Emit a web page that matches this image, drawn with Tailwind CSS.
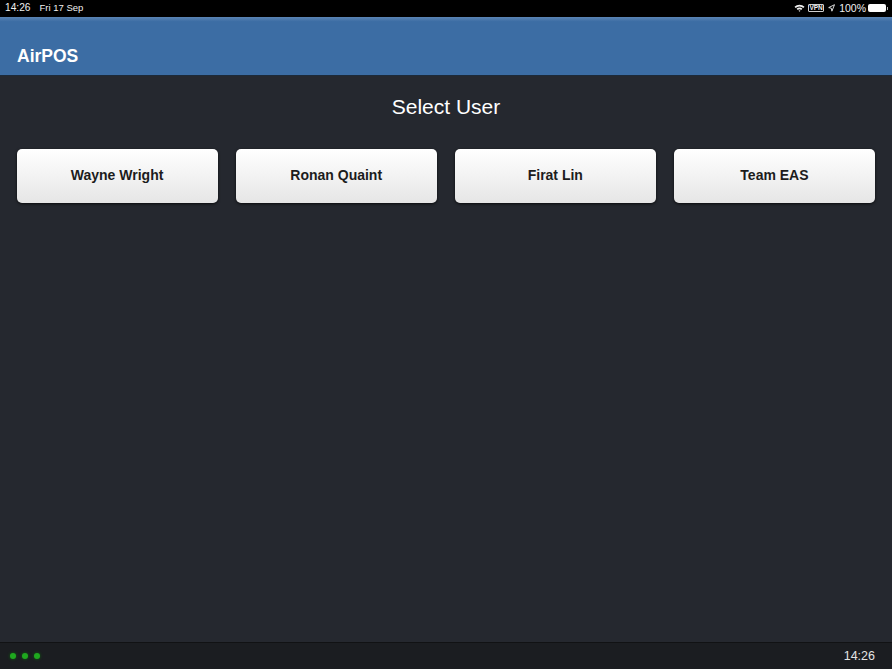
<!DOCTYPE html>
<html lang="en">
<head>
    <meta charset="UTF-8">
    <meta name="viewport" content="width=device-width, initial-scale=1.0">
    <title>AirPOS</title>
    <script src="https://cdn.jsdelivr.net/npm/@tailwindcss/browser@4"></script>
</head>
<body class="bg-[#25282f] text-white h-[669px] w-[892px] overflow-hidden flex flex-col font-['Liberation_Sans',sans-serif]">
    <!-- iOS status bar -->
    <div class="h-[17px] pb-[1px] bg-black flex items-center justify-between pl-[5px] pr-[4px] text-[9.5px] leading-none text-[#f0f0f0]">
        <div class="flex gap-[9px]">
            <span class="text-[10.2px]">14:26</span>
            <span>Fri 17 Sep</span>
        </div>
        <div class="flex items-center">
            <svg class="w-[11px] h-[8px] mr-[3px]" viewBox="0 0 11 8">
                <path d="M0.5 2.8 A7 7 0 0 1 10.5 2.8 L9.3 4 A5.3 5.3 0 0 0 1.7 4 Z" fill="#f0f0f0"/>
                <path d="M2.6 4.8 A4 4 0 0 1 8.4 4.8 L7.2 6 A2.4 2.4 0 0 0 3.8 6 Z" fill="#f0f0f0"/>
                <path d="M4.5 6.7 A1.4 1.4 0 0 1 6.5 6.7 L5.5 7.8 Z" fill="#f0f0f0"/>
            </svg>
            <span class="border border-[#d0d0d0] rounded-[1px] text-[6.5px] font-bold leading-none w-[16px] h-[8px] flex items-center justify-center mr-[4px]">VPN</span>
            <svg class="w-[7px] h-[8px] mr-[4px]" viewBox="0 0 7 8" fill="none">
                <path d="M6.5 0.7 L0.7 3.6 L3.3 4.2 L3.9 7.2 Z" stroke="#f0f0f0" stroke-width="0.9" stroke-linejoin="round"/>
            </svg>
            <span class="mr-[2px] text-[10.5px]">100%</span>
            <div class="w-[18px] h-[8px] bg-white rounded-[2px]"></div>
            <div class="w-[1px] h-[3px] bg-[#bbb] ml-[1px]"></div>
        </div>
    </div>

    <!-- Header -->
    <div class="h-[59px] bg-gradient-to-b from-[#5a84b4] from-0% to-[#3c6da4] to-[8%] border-b border-[#1c2a3a] flex items-end pl-[17px] pb-[7px]">
        <h1 class="text-[17.5px] leading-[24px] font-bold">AirPOS</h1>
    </div>

    <!-- User select -->
    <div class="flex-1 pl-[16.5px]">
        <h2 class="text-[21px] leading-[24px] text-center mt-[19px] mb-[29.5px] w-[859px]">Select User</h2>
        <div class="grid grid-cols-4 gap-[18px] w-[858.5px]">
            <button class="h-[54px] rounded-[5px] bg-gradient-to-b from-white to-[#e6e6e6] text-[#1c1c1c] font-bold text-[14px] shadow-[0_1px_3px_rgba(0,0,0,0.7)]">Wayne Wright</button>
            <button class="h-[54px] rounded-[5px] bg-gradient-to-b from-white to-[#e6e6e6] text-[#1c1c1c] font-bold text-[14px] shadow-[0_1px_3px_rgba(0,0,0,0.7)]">Ronan Quaint</button>
            <button class="h-[54px] rounded-[5px] bg-gradient-to-b from-white to-[#e6e6e6] text-[#1c1c1c] font-bold text-[14px] shadow-[0_1px_3px_rgba(0,0,0,0.7)]">Firat Lin</button>
            <button class="h-[54px] rounded-[5px] bg-gradient-to-b from-white to-[#e6e6e6] text-[#1c1c1c] font-bold text-[14px] shadow-[0_1px_3px_rgba(0,0,0,0.7)]">Team EAS</button>
        </div>
    </div>

    <!-- Footer -->
    <div class="h-[27px] bg-[#1b1d21] border-t border-[#111214] flex items-center justify-between pl-[10px] pr-[17px]">
        <div class="flex gap-[6px]">
            <span class="w-[6px] h-[6px] rounded-full bg-[#1fa81f] shadow-[0_0_3px_#0d6e0d]"></span>
            <span class="w-[6px] h-[6px] rounded-full bg-[#1fa81f] shadow-[0_0_3px_#0d6e0d]"></span>
            <span class="w-[6px] h-[6px] rounded-full bg-[#1fa81f] shadow-[0_0_3px_#0d6e0d]"></span>
        </div>
        <span class="text-[12.5px] text-[#e4e4e4]">14:26</span>
    </div>
</body>
</html>
